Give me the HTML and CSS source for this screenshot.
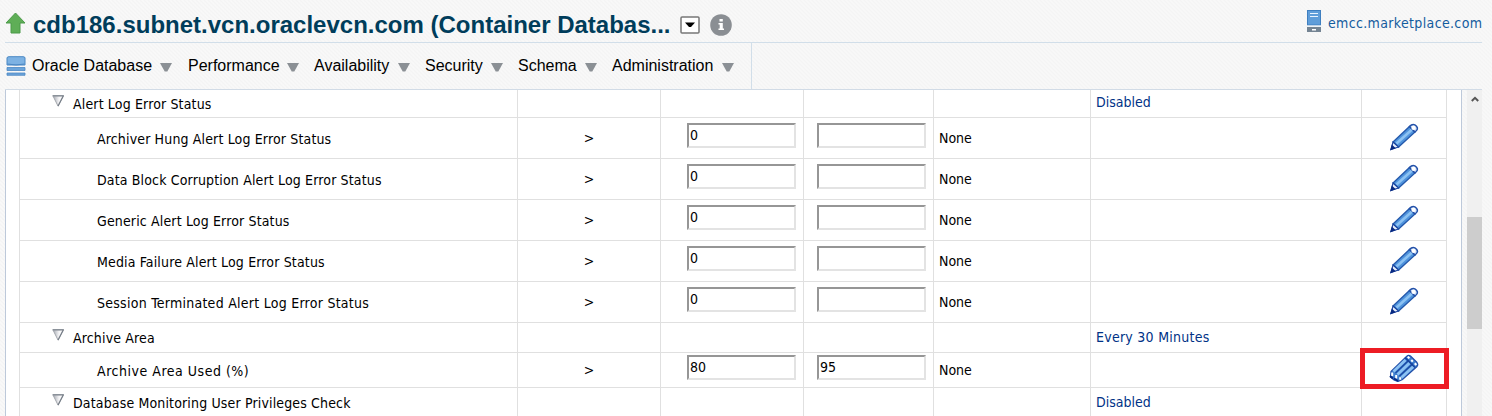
FILE: index.html
```html
<!DOCTYPE html>
<html lang="en">
<head>
<meta charset="utf-8">
<title>cdb186.subnet.vcn.oraclevcn.com</title>
<link rel="stylesheet" href="styles.css">
</head>
<body>
<svg class="defs" aria-hidden="true">
  <defs>
    <linearGradient id="tri" x1="0" y1="0" x2="1" y2="0">
      <stop offset="0" stop-color="#a4a8b0"/><stop offset=".6" stop-color="#f4f4f6"/><stop offset="1" stop-color="#ffffff"/>
    </linearGradient>
    <symbol id="pencil" viewBox="0 0 30 28">
      <path d="M4 19 20.500 3.500 26 9 9.500 24Z" fill="#4f93dc" stroke="#2459ac" stroke-width="1.300"/>
      <path d="M7.500 20.500 23 6.500" stroke="#8cc2f3" stroke-width="2.600"/>
      <path d="M20.500 3.500C23 .8 25.500 1 27.500 3.200C29.300 5.300 28.500 7 26 9Z" fill="#c9dcf7" stroke="#2350a8" stroke-width="1.500"/>
      <circle cx="24.500" cy="4.900" r="2.100" fill="#fff"/>
      <path d="M4 19 9.500 24 2 26.500Z" fill="#e8f0fc" stroke="#17429d" stroke-width="1.100"/>
      <path d="M2.800 21.500 6.800 25.300 1 27.500Z" fill="#082a83"/>
    </symbol>
    <symbol id="pencils" viewBox="0 0 30 28">
      <path d="M2 17.500 17.500 2.500Q19.500 .5 21.500 2L28 8.500Q29.500 10.500 28 12.500L13.500 25.500 9 27.500 5 26 1.500 23Z" fill="#3f7fcf" stroke="#2350a8" stroke-width="1.200"/>
      <path d="M4.500 17.500 16.500 6M8.500 20.500 20.500 9M12.500 23.500 25 12" stroke="#8cc2f3" stroke-width="2.700"/>
      <path d="M6.500 19 20 6M10.500 22 24 9.500" stroke="#1b4aa3" stroke-width="1.200"/>
      <path d="M16 3.500 26 13.500" stroke="#17429d" stroke-width="1.500"/>
      <path d="M18.800 4.200 20.300 2.800M22.300 7.500 23.800 6.200M25.800 10.800 27.300 9.400" stroke="#fff" stroke-width="2.300"/>
      <path d="M3.200 18.500v3.500M7.200 21v3.500M11.200 23.300v2.500" stroke="#fff" stroke-width="2"/>
      <path d="M1 22 4 24.500M5 24.500 9 27" stroke="#082a83" stroke-width="2"/>
    </symbol>
    <symbol id="toggle" viewBox="0 0 12 12">
      <path d="M1 1H11L6 11Z" fill="url(#tri)" stroke="#a4a8ae" stroke-width="1"/>
      <path d="M.5 .8H11.500L6 11.300" fill="none" stroke="#747c86" stroke-width="1.100"/>
    </symbol>
    <symbol id="caret" viewBox="0 0 12 9"><path d="M0 0H12L7.300 8.500H4.700Z" fill="#8b9095"/></symbol>
  </defs>
</svg>

<header class="target">
  <svg class="up" viewBox="0 0 21 22"><path d="M10.500 1 20 11H15V21H6V11H1Z" fill="#5fae57" stroke="#4b9a48"/></svg>
  <h1 class="title">cdb186.subnet.vcn.oraclevcn.com (Container Databas...</h1>
  <svg class="drop" viewBox="0 0 20 18"><rect x="1" y="1" width="18" height="16" rx="1" fill="#fff" stroke="#777" stroke-width="1.500"/><path d="M5 6.500h10l-4 4.500H9Z" fill="#000"/></svg>
  <svg class="info" viewBox="0 0 22 22"><circle cx="11" cy="11" r="10.800" fill="#8a8e93"/><path d="M9.500 5h3.300v2.500H9.500zM8.500 9h4.300v5.500H14V16H8.500v-1.500h1.200v-4H8.500Z" fill="#fff"/></svg>
  <div class="host">
    <svg class="server" viewBox="0 0 14 22"><rect x=".5" y=".5" width="13" height="14.500" fill="#5f9dd9" stroke="#3f7fc0"/><path d="M3 3.500h8M3 6.500h8" stroke="#eaf4ff" stroke-width="1.200"/><path d="M0 15.500h14v1H0z" fill="#e5edf5"/><rect x="0" y="17" width="14" height="5" fill="#748493"/><path d="M5 19h4v1.500H5z" fill="#fff"/></svg>
    <span>emcc.marketplace.com</span>
  </div>
</header>

<nav class="menubar">
  <div class="menus">
    <svg class="db" viewBox="0 0 20 20"><path d="M1 2Q1 .7 3 .7H17Q19 .7 19 2V9H1Z" fill="#7db2e3" stroke="#4b88c4"/><path d="M1.500 8Q10 10 18.500 8" fill="none" stroke="#4b88c4"/><path d="M1 11.500H19V14.500H1ZM1 17H19V19.300H1Z" fill="#6ba4da" stroke="#4b88c4" stroke-width=".8"/></svg>
    <span class="menu m1">Oracle Database<svg class="caret"><use href="#caret"/></svg></span>
    <span class="menu m2">Performance<svg class="caret"><use href="#caret"/></svg></span>
    <span class="menu m3">Availability<svg class="caret"><use href="#caret"/></svg></span>
    <span class="menu m4">Security<svg class="caret"><use href="#caret"/></svg></span>
    <span class="menu m5">Schema<svg class="caret"><use href="#caret"/></svg></span>
    <span class="menu m6">Administration<svg class="caret"><use href="#caret"/></svg></span>
  </div>
</nav>

<main class="content">
  <section class="panel">
    <div class="grid">
      <div class="row group first"><div class="name"><svg class="toggle"><use href="#toggle"/></svg><span>Alert Log Error Status</span></div><div></div><div></div><div></div><div></div><div class="link">Disabled</div><div></div></div>
      <div class="row metric"><div class="name">Archiver Hung Alert Log Error Status</div><div class="op">&gt;</div><div class="warn"><span class="field">0</span></div><div class="crit"><span class="field"></span></div><div class="act">None</div><div></div><div class="edit"><svg class="pen"><use href="#pencil"/></svg></div></div>
      <div class="row metric"><div class="name">Data Block Corruption Alert Log Error Status</div><div class="op">&gt;</div><div class="warn"><span class="field">0</span></div><div class="crit"><span class="field"></span></div><div class="act">None</div><div></div><div class="edit"><svg class="pen"><use href="#pencil"/></svg></div></div>
      <div class="row metric"><div class="name">Generic Alert Log Error Status</div><div class="op">&gt;</div><div class="warn"><span class="field">0</span></div><div class="crit"><span class="field"></span></div><div class="act">None</div><div></div><div class="edit"><svg class="pen"><use href="#pencil"/></svg></div></div>
      <div class="row metric"><div class="name">Media Failure Alert Log Error Status</div><div class="op">&gt;</div><div class="warn"><span class="field">0</span></div><div class="crit"><span class="field"></span></div><div class="act">None</div><div></div><div class="edit"><svg class="pen"><use href="#pencil"/></svg></div></div>
      <div class="row metric"><div class="name wide">Session Terminated Alert Log Error Status</div><div class="op">&gt;</div><div class="warn"><span class="field">0</span></div><div class="crit"><span class="field"></span></div><div class="act">None</div><div></div><div class="edit"><svg class="pen"><use href="#pencil"/></svg></div></div>
      <div class="row group"><div class="name"><svg class="toggle"><use href="#toggle"/></svg><span>Archive Area</span></div><div></div><div></div><div></div><div></div><div class="link wide">Every 30 Minutes</div><div></div></div>
      <div class="row metric short"><div class="name wider">Archive Area Used (%)</div><div class="op">&gt;</div><div class="warn"><span class="field">80</span></div><div class="crit"><span class="field">95</span></div><div class="act">None</div><div></div><div class="edit marked"><svg class="pen"><use href="#pencils"/></svg></div></div>
      <div class="row group last"><div class="name"><svg class="toggle"><use href="#toggle"/></svg><span>Database Monitoring User Privileges Check</span></div><div></div><div></div><div></div><div></div><div class="link">Disabled</div><div></div></div>
    </div>
  </section>
  <aside class="scrollbar">
    <svg class="scroll-up" viewBox="0 0 8 6"><path d="M.8 5 4 1.800 7.200 5" fill="none" stroke="#555" stroke-width="2"/></svg>
    <div class="thumb"></div>
  </aside>
</main>
</body>
</html>
```
FILE: styles.css
```css
*, *::after { box-sizing: border-box; }
body {
  margin: 0;
  width: 1492px;
  height: 416px;
  overflow: hidden;
  display: flex;
  flex-direction: column;
  padding: 0 10px 0 5px;
  font-family: "Liberation Sans", Arial, sans-serif;
  color: #000;
  background: repeating-linear-gradient(45deg, #f4f4f4 0, #f9f9f9 1.414px, #f4f4f4 2.828px);
}
.defs { position: absolute; width: 0; height: 0; }
svg { flex: none; display: block; }

.target {
  height: 43px;
  flex: none;
  display: flex;
  align-items: flex-start;
  border-bottom: 1px solid #d1dee9;
}
.up { width: 21px; height: 22px; margin-top: 12px; }
.title {
  margin: 11px 0 0 7px;
  width: 647px;
  font-size: 24px;
  line-height: 28px;
  font-weight: bold;
  white-space: nowrap;
  color: #003d5b;
}
.drop { width: 20px; height: 18px; margin-top: 16px; }
.info { width: 22px; height: 22px; margin: 14px 0 0 10px; }
.host {
  display: flex;
  margin-left: auto;
  color: #145c9e;
  font: 14px/18px "DejaVu Sans Condensed", "DejaVu Sans", sans-serif;
  letter-spacing: .35px;
}
.host span { width: 154px; margin-top: 14px; white-space: nowrap; }
.server { width: 14px; height: 22px; margin: 10px 7px 0 0; }

.menubar { height: 47px; flex: none; border-bottom: 1px solid #d1dbe6; }
.menus {
  display: flex;
  width: 747px;
  height: 46px;
  border-right: 1px solid #d1dee9;
}
.db { width: 20px; height: 20px; margin: 13px 6px 0 1px; }
.menu {
  display: flex;
  justify-content: space-between;
  padding-top: 14px;
  font-size: 16px;
  line-height: 18px;
  white-space: nowrap;
}
.caret { width: 12px; height: 9px; margin-top: 6px; }
.m1 { width: 140px; margin-right: 16px; }
.m2 { width: 111px; margin-right: 15px; }
.m3 { width: 96px; margin-right: 15px; }
.m4 { width: 78px; margin-right: 15px; }
.m5 { width: 79px; margin-right: 15px; }
.m6 { width: 122px; }

.content { display: flex; flex: 1; min-height: 0; }
.panel {
  width: 1457px;
  padding-left: 13px;
  overflow: hidden;
  background: #fff;
  border-left: 1px solid #bdc9da;
  border-right: 1px solid #bdc9da;
}
.grid {
  width: 1428px;
  border-left: 1px solid #e0e0e0;
  font: 14px/20px "DejaVu Sans Condensed", "DejaVu Sans", sans-serif;
}
.row { display: grid; grid-template-columns: 498px 143px 143px 130px 157px 271px 85px; }
.row > div {
  display: flex;
  align-items: flex-start;
  border-right: 1px solid #e0e0e0;
  border-bottom: 1px solid #e0e0e0;
  white-space: nowrap;
}
.name { letter-spacing: .15px; }
.wide { letter-spacing: .26px; }
.wider { letter-spacing: .52px; }
.metric { height: 41px; }
.metric .name { padding: 11px 0 0 77px; }
.op { justify-content: center; padding-top: 10px; }
.warn { padding: 5px 0 0 26px; }
.crit { padding: 5px 0 0 13px; }
.act { padding: 10px 0 0 5px; }
.edit { justify-content: center; padding-top: 5px; }
.pen { width: 30px; height: 28px; }
.field {
  width: 109px;
  height: 25px;
  padding-left: 1px;
  line-height: 21px;
  background: #fff;
  border: 2px solid;
  border-color: #969696 #e3e3e3 #e3e3e3 #969696;
}

.group { height: 30px; }
.group .name { padding: 5px 0 0 32px; }
.toggle { width: 12px; height: 12px; margin: 1px 9px 0 0; }
.link { padding: 4px 0 0 5px; color: #003286; }
.first { height: 28px; }
.first .name { padding-top: 4px; }
.first .link { padding-top: 2px; }

.short { height: 35px; }
.short .name { padding-top: 8px; }
.short .op, .short .act { padding-top: 7px; }
.short .warn, .short .crit { padding-top: 2px; }
.short .edit { padding-top: 1px; }
.marked { position: relative; }
.marked::after {
  content: "";
  position: absolute;
  left: -2px;
  top: -5px;
  width: 89px;
  height: 41px;
  border: 5px solid #ed1c24;
}

.scrollbar { width: 15px; margin-left: 5px; background: #f0f0f0; }
.scroll-up { width: 8px; height: 6px; margin: 6px 0 0 4px; }
.thumb { height: 112px; margin-top: 115px; background: #cdcdcd; }
```
